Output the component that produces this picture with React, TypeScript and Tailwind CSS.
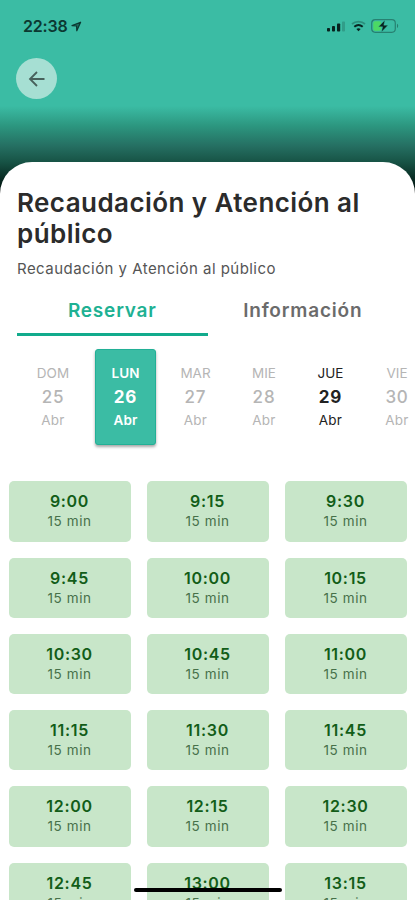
import React from 'react';

interface Day {
  name: string;
  date: number;
  width: string;
  state: 'disabled' | 'selected' | 'available';
}

const days: Day[] = [
  { name: 'DOM', date: 25, width: 'w-[84px]', state: 'disabled' },
  { name: 'LUN', date: 26, width: 'w-[61px]', state: 'selected' },
  { name: 'MAR', date: 27, width: 'w-[79px]', state: 'disabled' },
  { name: 'MIE', date: 28, width: 'w-[58px]', state: 'disabled' },
  { name: 'JUE', date: 29, width: 'w-[75px]', state: 'available' },
  { name: 'VIE', date: 30, width: 'w-[58px]', state: 'disabled' },
];

const dayStyles = {
  disabled: 'text-[#b5b5b5]',
  selected: 'rounded-[3px] bg-[#3bbca4] text-white shadow-[0_2px_3px_rgba(0,0,0,0.35)] border border-[#22b096]',
  available: 'text-[#222222]',
};

const slots = [
  '9:00', '9:15', '9:30',
  '9:45', '10:00', '10:15',
  '10:30', '10:45', '11:00',
  '11:15', '11:30', '11:45',
  '12:00', '12:15', '12:30',
  '12:45', '13:00', '13:15',
];

const StatusBar: React.FC = () => (
  <div className="flex h-[52px] items-center justify-between pl-[23px] pr-[16px]">
    <div className="flex items-center gap-[4px]">
      <span className="-mt-px text-[16px] font-semibold leading-5 tracking-[-0.2px] text-[#0b3831]">22:38</span>
      <svg className="h-[11px] w-[11px] text-[#0b3831]" viewBox="0 0 11 11" fill="none" stroke="currentColor">
        <path d="M1 4.6L9.6 1.2L5.8 9.8L5.6 5Z" fill="currentColor" fillOpacity={0.6} strokeWidth={1.2} strokeLinejoin="round" />
      </svg>
    </div>
    <div className="flex items-center">
      <svg className="h-[11px] w-[19px]" viewBox="0 0 19 11" fill="#08231f">
        <rect x="0" y="7" width="3" height="3.5" rx="0.8" />
        <rect x="5" y="5" width="3" height="5.5" rx="0.8" />
        <rect x="10" y="2.5" width="3.2" height="8" rx="0.8" />
        <rect x="15" y="0.5" width="3" height="10" rx="0.8" fillOpacity={0.2} />
      </svg>
      <svg className="ml-[5px] h-[12px] w-[15px]" viewBox="0 0 15 12" fill="none" stroke="#08231f">
        <path d="M1 4C4.6 0.7 10.4 0.7 14 4" strokeOpacity={0.3} strokeWidth={1.7} />
        <path d="M3.3 6.8C5.8 4.6 9.2 4.6 11.7 6.8" strokeWidth={2} />
        <path d="M5.4 9C6.6 8 8.4 8 9.6 9L7.5 11.2Z" fill="#08231f" stroke="none" />
      </svg>
      <svg className="ml-[5px] h-[14px] w-[28px]" viewBox="0 0 28 14">
        <rect x="0.7" y="0.7" width="23.6" height="12.6" rx="3.5" fill="none" stroke="#08231f" strokeOpacity={0.38} strokeWidth={1.2} />
        <path d="M26 4.7C27.6 5.4 27.6 8.2 26 9Z" fill="#08231f" fillOpacity={0.4} />
        <rect x="2.3" y="2.3" width="7.7" height="9.4" rx="1.8" fill="#4cd964" />
        <path d="M14 1L7.5 7.8H11.6L10.5 13L17 6.2H12.8Z" fill="#08231f" stroke="#3bbca4" strokeWidth={0.4} />
      </svg>
    </div>
  </div>
);

const DayItem: React.FC<{ day: Day }> = ({ day }) => (
  <div className={`flex h-[96px] shrink-0 flex-col items-center justify-center pb-[2px] ${day.width} ${dayStyles[day.state]}`}>
    <span className={`text-[13.5px] leading-[22px] ${day.state === 'selected' ? 'font-semibold' : ''}`}>{day.name}</span>
    <span className={`text-[17px] leading-[26px] tracking-[0.8px] ${day.state === 'disabled' ? 'font-medium' : 'font-bold'}`}>
      {day.date}
    </span>
    <span className={`text-[13.5px] leading-[21px] tracking-[0.2px] ${day.state === 'selected' ? 'font-semibold' : ''}`}>Abr</span>
  </div>
);

const SlotCard: React.FC<{ time: string }> = ({ time }) => (
  <button className="flex h-[60.3px] flex-col items-center rounded-[5px] bg-[#c8e6c9] pt-[9px]">
    <span className="text-[16px] font-semibold leading-[22px] tracking-[0.7px] text-[#125d18]">{time}</span>
    <span className="text-[13.5px] leading-[19.5px] tracking-[0.6px] text-[#47704a]">15 min</span>
  </button>
);

const App: React.FC = () => {
  return (
    <div className="relative flex h-[900px] w-full flex-col overflow-hidden bg-white font-['Inter',sans-serif]">
      <header className="h-[194px] shrink-0 bg-[linear-gradient(#3bbca4_0,#3bbca4_106px,#2c967f_126px,#256f62_146px,#175345_162px,#001510_188px,#000_194px)]">
        <StatusBar />
        <button className="ml-4 mt-[6px] flex h-[41px] w-[41px] items-center justify-center rounded-full bg-[#a6dfd3]">
          <svg className="h-[18px] w-[18px] text-[#47615b]" viewBox="0 0 18 18" fill="none" stroke="currentColor">
            <path d="M16.5 9H2M9 2L2 9L9 16" strokeWidth={1.8} />
          </svg>
        </button>
      </header>

      <main className="-mt-[32px] flex-1 rounded-t-[32px] bg-white pt-[25px]">
        <h1 className="px-[17px] text-[26px] font-semibold leading-[31px] tracking-[0.43px] text-[#2b2b2b]">
          Recaudación y Atención al público
        </h1>
        <p className="mt-[9px] px-[17px] text-[15px] leading-[22px] tracking-[0.46px] text-[#555555]">
          Recaudación y Atención al público
        </p>

        <nav className="mx-[17px] mt-[16px] grid grid-cols-2 text-[19px] font-semibold leading-[30px] tracking-[0.8px]">
          <button className="h-[40px] border-b-[3px] border-[#12ab8c] pb-[7px] text-[#1eb193]">Reservar</button>
          <button className="h-[40px] pb-[10px] text-[#6b6b6b]">Información</button>
        </nav>

        <div className="mt-[13px] flex overflow-visible pl-[11px]">
          {days.map((day) => (
            <DayItem key={day.date} day={day} />
          ))}
        </div>

        <div className="mt-[36.3px] grid grid-cols-3 gap-4 px-[8.5px]">
          {slots.map((time) => (
            <SlotCard key={time} time={time} />
          ))}
        </div>
      </main>

      {/* home indicator */}
      <div className="absolute bottom-[8px] left-[134px] h-[4px] w-[148px] rounded-full bg-black" />
    </div>
  );
};

export default App;
